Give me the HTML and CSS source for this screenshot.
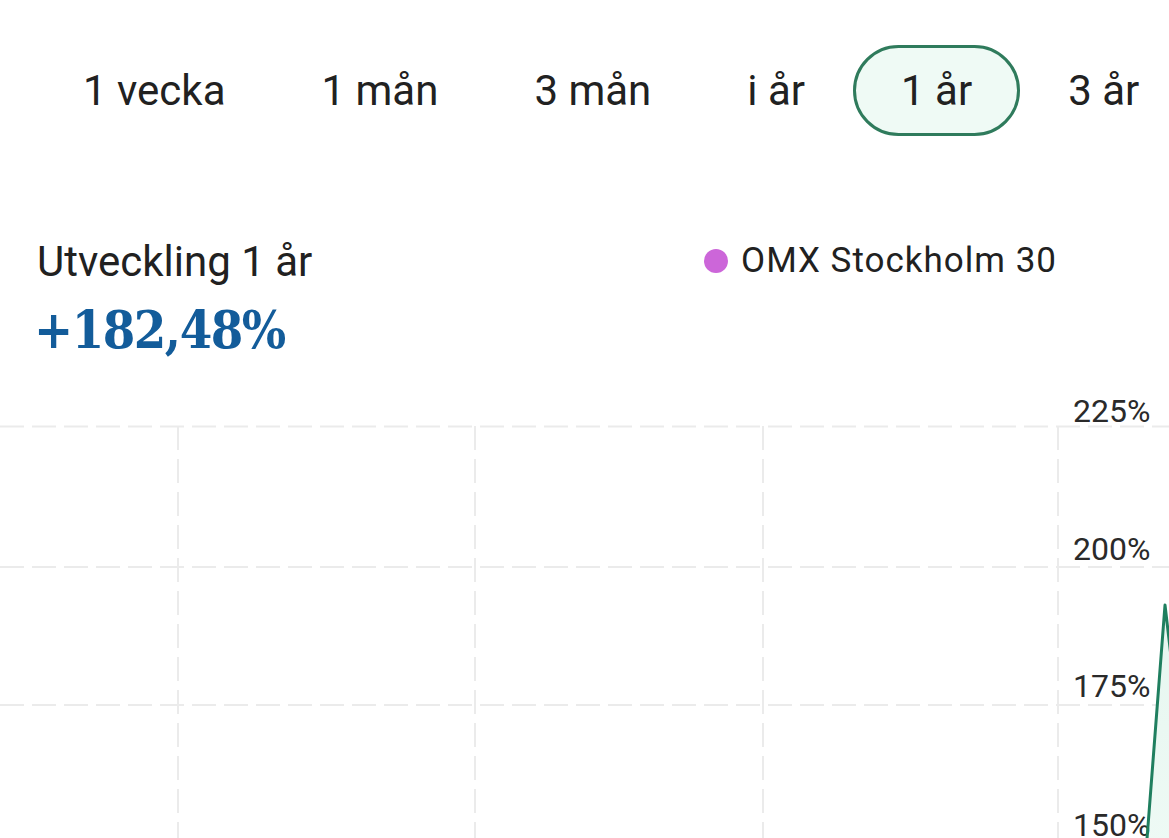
FILE: index.html
```html
<!DOCTYPE html>
<html lang="sv">
<head>
<meta charset="utf-8">
<title>Utveckling</title>
<link rel="stylesheet" href="styles.css">
</head>
<body>
<div class="page">
  <nav class="tabs">
    <button class="tab">1 vecka</button>
    <button class="tab">1 mån</button>
    <button class="tab">3 mån</button>
    <button class="tab">i år</button>
    <button class="tab tab-active">1 år</button>
    <button class="tab">3 år</button>
  </nav>

  <section class="summary">
    <div class="perf">
      <div class="perf-label">Utveckling 1 år</div>
      <div class="perf-value">+182,48%</div>
    </div>
    <div class="legend">
      <span class="legend-dot"></span>
      <span class="legend-text">OMX Stockholm 30</span>
    </div>
  </section>

  <div class="chart">
    <svg class="chart-svg" width="1169" height="470" viewBox="0 380 1169 470">
      <defs>
        <linearGradient id="fillg" x1="0" y1="0" x2="0" y2="1">
          <stop offset="0" stop-color="#e6f6ef"/>
          <stop offset="1" stop-color="#eefaf5"/>
        </linearGradient>
      </defs>
      <g class="grid-h">
        <line x1="0" y1="426.5" x2="1169" y2="426.5"/>
        <line x1="0" y1="567" x2="1169" y2="567"/>
        <line x1="0" y1="705" x2="1169" y2="705"/>
        <line x1="0" y1="844" x2="1169" y2="844"/>
      </g>
      <g class="grid-v">
        <line x1="178" y1="426" x2="178" y2="850"/>
        <line x1="475" y1="426" x2="475" y2="850"/>
        <line x1="763" y1="426" x2="763" y2="850"/>
        <line x1="1058" y1="426" x2="1058" y2="850"/>
      </g>
      <polygon class="area" points="1147,850 1165,605 1172,665 1172,850"/>
      <g class="axis">
        <text x="1073" y="421.5">225%</text>
        <text x="1073" y="560">200%</text>
        <text x="1073" y="697">175%</text>
        <text x="1073" y="836">150%</text>
      </g>
      <polyline class="line" points="1146,852 1165,605 1172,665"/>
    </svg>
  </div>
</div>
</body>
</html>
```

FILE: styles.css
```css
html, body {
  margin: 0;
  padding: 0;
  background: #ffffff;
}

body {
  font-family: Roboto, "Noto Sans", "Liberation Sans", sans-serif;
  color: #212121;
  width: 1169px;
  height: 838px;
  overflow: hidden;
}

.page {
  display: flex;
  flex-direction: column;
}

.tabs {
  display: flex;
  gap: 0;
  padding: 45px 0 0 35px;
  white-space: nowrap;
  overflow: hidden;
}

.tab {
  flex: none;
  height: 91px;
  padding: 0 45px;
  border: 3px solid transparent;
  border-radius: 46px;
  background: transparent;
  font-family: Roboto, "Noto Sans", sans-serif;
  font-size: 42px;
  line-height: 50px;
  color: #212121;
  display: flex;
  align-items: center;
  cursor: pointer;
}

.tab-active {
  border-color: #2f7b5c;
  background: #effaf5;
}

.summary {
  display: flex;
  justify-content: space-between;
  align-items: flex-start;
  padding: 0 112px 0 37px;
  margin-top: 101px;
}

.perf-label {
  font-size: 42px;
  line-height: 50px;
  color: #212121;
}

.perf-value {
  font-family: "DejaVu Serif Condensed", "DejaVu Serif", serif;
  font-weight: bold;
  font-size: 52px;
  line-height: 56px;
  color: #135c9a;
  letter-spacing: -1.5px;
  margin: 15px 0 0 -3px;
}

.legend {
  display: flex;
  align-items: center;
  gap: 13px;
  margin-top: 3px;
}

.legend-dot {
  width: 24px;
  height: 24px;
  border-radius: 50%;
  background: #cc66d9;
  flex: none;
}

.legend-text {
  font-size: 35px;
  line-height: 42px;
  letter-spacing: 1px;
  color: #212121;
}

.chart {
  position: absolute;
  left: 0;
  top: 380px;
}

.chart-svg {
  display: block;
}

.grid-h line {
  stroke: #ebebeb;
  stroke-width: 2;
  stroke-dasharray: 24 8;
}

.grid-v line {
  stroke: #ebebeb;
  stroke-width: 2;
  stroke-dasharray: 24 9;
}

.area {
  fill: url(#fillg);
}

.axis text {
  font-family: Roboto, "Noto Sans", sans-serif;
  font-size: 32px;
  fill: #2a2a2a;
}

.line {
  fill: none;
  stroke: #1f7f5f;
  stroke-width: 3;
  stroke-linejoin: round;
}
```
